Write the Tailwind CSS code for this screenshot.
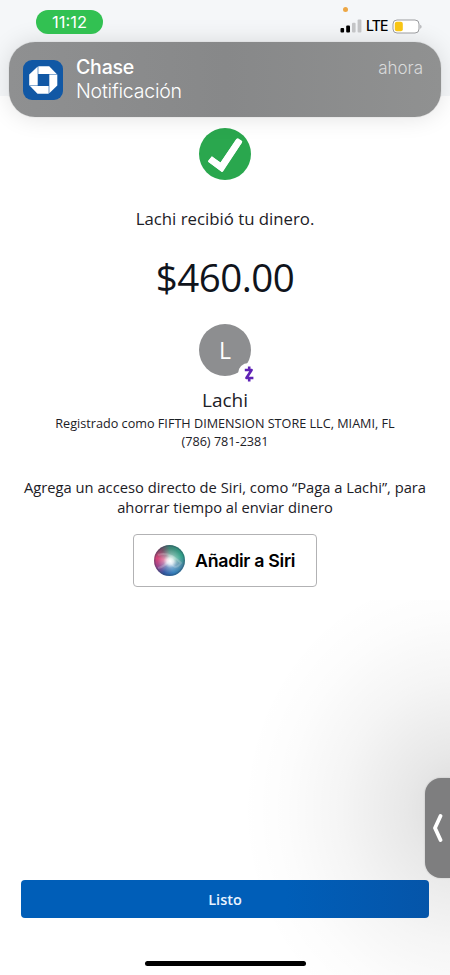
<!DOCTYPE html>
<html lang="es">
<head>
<meta charset="utf-8">
<title>Chase</title>
<script src="https://cdn.jsdelivr.net/npm/@tailwindcss/browser@4"></script>
</head>
<body class="bg-white">
<div class="relative flex h-[975px] w-[450px] flex-col overflow-hidden bg-white font-['Open_Sans',sans-serif] text-[#1c2026]">
  <header class="h-24 shrink-0 bg-[#f5f7f9] pt-[10px] font-[Inter,sans-serif]">
    <div class="flex h-6 items-start justify-between pr-7 pl-9">
      <div class="relative z-10 flex h-6 w-[67px] items-center justify-center rounded-full bg-[#32c152] text-[16.500px] text-white"><span>11:12</span></div>
      <div class="relative z-10 flex h-8 items-center">
        <svg class="h-[14px] w-[22px]" viewBox="0 0 22 14"><rect x="0.5" y="9" width="3.6" height="4.5" rx="1" fill="#000"/><rect x="6.2" y="6.5" width="3.8" height="7" rx="1" fill="#000"/><rect x="12" y="3.7" width="3.6" height="9.8" rx="1" fill="#c3c4c6"/><rect x="17.6" y="0.5" width="3.8" height="13" rx="1" fill="#c3c4c6"/></svg>
        <span class="ml-1 w-[22px] text-[14px] leading-none font-medium tracking-[-0.9px] text-black">LTE</span>
        <svg class="ml-1 h-[15px] w-[30px]" viewBox="0 0 30 15"><rect x="1" y="1" width="26" height="13" rx="4" fill="#fff" stroke="#9b9c9f"/><rect x="2.8" y="2.8" width="8" height="9.4" rx="2" fill="#f8c514"/><path d="M28.4 5.7v4c1.4-.6 1.4-3.400 0-4z" fill="#9b9c9f"/></svg>
      </div>
    </div>
  </header>
  <div class="absolute top-[7px] left-[343px] z-10 size-[5px] rounded-full bg-[#eda745]"></div>

  <section class="absolute top-[42px] left-[9px] flex h-[75px] w-[432px] rounded-[26px] bg-linear-to-r from-[#8f9091] via-[#878889] to-[#909191] pt-[18px] pr-[18px] pl-[14px] font-[Inter,sans-serif] text-white shadow-[0_0_24px_rgba(0,0,0,0.12),0_0_1px_rgba(0,0,0,0.3)]">
    <svg class="size-10 shrink-0" viewBox="0 0 40 40"><rect width="40" height="40" rx="9" fill="#1158a5"/><g fill="#fff"><path d="M15.300 6.200H26.200L33.700 14H15.300z"/><path d="M34.300 14.600V25.500L26.300 33.200V14.600z"/><path d="M25.700 33.800H14.500L7 26.100H25.700z"/><path d="M6.200 25.500V14.500L14.700 6.500V25.500z"/></g></svg>
    <div class="ml-[13px] flex-1">
      <div class="-mt-[5px] text-[19.500px] leading-6 font-medium tracking-[-0.2px]">Chase</div>
      <div class="text-[19.500px] leading-6 font-light tracking-[-0.2px]">Notificación</div>
    </div>
    <div class="-mt-[4px] text-[17px] leading-6 font-light text-[#d9dadb]">ahora</div>
  </section>

  <div class="pointer-events-none absolute top-[600px] left-[230px] h-[375px] w-[220px] bg-[radial-gradient(ellipse_220px_240px_at_105%_56%,rgba(0,0,0,0.15)_0%,rgba(0,0,0,0.09)_25%,rgba(0,0,0,0.04)_55%,rgba(0,0,0,0.012)_80%,transparent_100%)]"></div>

  <main class="flex flex-col items-center pt-8 whitespace-nowrap">
    <svg class="size-[52px]" viewBox="0 0 52 52"><circle cx="26" cy="26" r="26" fill="#2aa74e"/><path d="M11 31L22.200 39.300L40.200 12.600" fill="none" stroke="#fff" stroke-width="6.600"/><path d="M9.300 32.500L12.700 28.400L21.600 34.600L37.600 10.900Q38.300 9.800 39.400 10.500L42.800 12.800Q43.700 13.500 43 14.600L24.200 43.200Q23.400 44.400 22.200 43.500L9.600 34Q8.600 33.300 9.300 32.500z" fill="#fff"/></svg>
    <p class="mt-[27px] text-[16.800px] leading-6">Lachi recibió tu dinero.</p>
    <p class="mt-[21px] text-[38.500px] leading-[50px] tracking-[-0.5px] text-[#10141c]">$460.00</p>
    <div class="relative mt-[22px] flex size-[52px] items-center justify-center rounded-full bg-[#8d8e90] text-[23px] text-white">
      <span>L</span>
      <div class="absolute top-[39px] left-[39px] flex size-[21px] items-center justify-center rounded-full bg-white">
        <svg class="h-4 w-3" viewBox="0 0 12 16" fill="none" stroke="#5f22b5" stroke-width="2.600"><path d="M1.800 4H8.600L3.400 12H10.400" stroke-linejoin="round"/><path d="M6.200 0.600V4M6.200 12v3.400"/></svg>
      </div>
    </div>
    <p class="mt-[11px] text-[19px] leading-[26px]">Lachi</p>
    <p class="mt-[1px] text-[12.650px] leading-[18px]">Registrado como FIFTH DIMENSION STORE LLC, MIAMI, FL</p>
    <p class="text-[12.650px] leading-[18px]">(786) 781-2381</p>
    <p class="mt-[27px] text-center text-[14.720px] leading-5">Agrega un acceso directo de Siri, como “Paga a Lachi”, para<br>ahorrar tiempo al enviar dinero</p>
    <button class="mt-[17px] flex h-[53px] w-[184px] items-center rounded-[4px] border border-[#b2b2b4] bg-white pl-5 font-[Inter,sans-serif] text-[17.800px] font-semibold tracking-[-0.3px] text-black">
      <span class="relative mr-[10px] size-[31px] shrink-0 overflow-hidden rounded-full bg-[conic-gradient(from_0deg,#35806f,#249b80_70deg,#397e9b_110deg,#2475b6_160deg,#284e9d_205deg,#9b3c85_245deg,#d53c73_280deg,#70465f_325deg,#35806f)]">
        <span class="absolute inset-0 bg-[radial-gradient(circle_at_52%_52%,#fff_0%,#ffffffd8_14%,#ffffff60_30%,#ffffff10_55%,transparent_70%)]"></span>
        <svg class="absolute inset-0 size-[31px]" viewBox="0 0 31 31" fill="none"><path d="M4 10Q15 6 27 18Q20 27 16 15Q10 22 4 23" stroke="#fff" stroke-opacity=".18" stroke-width="2"/><circle cx="15.500" cy="15.500" r="14.800" stroke="#344b65" stroke-opacity=".4" stroke-width="1.400"/></svg>
      </span>
      <span class="pt-px">Añadir a Siri</span>
    </button>
  </main>

  <footer class="mt-auto flex flex-col items-center px-[21px] pb-[9px]">
    <button class="relative h-[38px] w-full rounded-[4px] bg-linear-to-r from-[#005eb8] from-65% to-[#0555a9] pt-[2px] text-[14.500px] font-semibold text-[#e9f4ff]">Listo</button>
    <div class="mt-[43px] h-[5px] w-[161px] rounded-full bg-black"></div>
  </footer>

  <div class="absolute top-[778px] right-0 flex h-[100px] w-[25px] items-center rounded-l-[16px] bg-[#7e7e7f] pl-2 shadow-[0_0_2px_rgba(0,0,0,0.2)]">
    <svg class="h-7 w-[10px]" viewBox="0 0 10 28"><path d="M7.500 2L2 14L7.500 26" fill="none" stroke="#fff" stroke-width="3.800" stroke-linecap="round" stroke-linejoin="round"/></svg>
  </div>
</div>
</body>
</html>
